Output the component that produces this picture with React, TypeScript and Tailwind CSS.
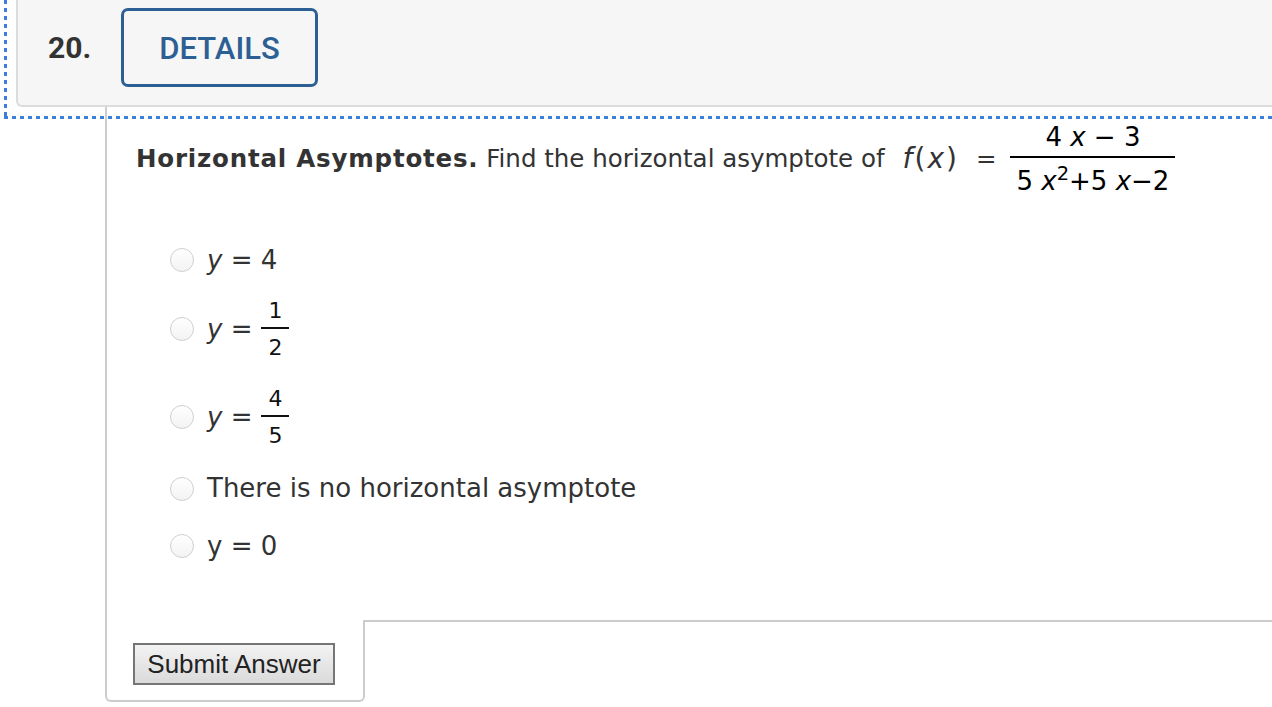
import React from "react";

function Radio() {
  return (
    <span className="block w-[24px] h-[24px] shrink-0 rounded-full border border-[#cfcfcf] bg-gradient-to-b from-white to-[#f3f3f3]" />
  );
}

function SmallFrac({ num, den }: { num: string; den: string }) {
  return (
    <span className="inline-flex flex-col items-center text-[22px] text-[#111]">
      <span className="leading-[20px] px-[7px]">{num}</span>
      <span className="mt-[6px] h-[2px] w-full bg-[#111]" />
      <span className="mt-[9px] leading-[20px] px-[7px]">{den}</span>
    </span>
  );
}

export default function App() {
  return (
    <div className="relative w-[1272px] h-[707px] overflow-hidden bg-white font-['DejaVu_Sans',sans-serif] text-[#333]">
      {/* header */}
      <div className="ml-[16px] mr-[-40px] h-[107px] pt-[8px] bg-[#f6f6f6] border-l-2 border-b-2 border-[#dcdcdc] rounded-bl-[6px]">
        <div className="flex items-center h-[79px] pl-[30px]">
          <span className="w-[73px] font-['Roboto',sans-serif] font-bold text-[30px] text-[#333]">20.</span>
          <span className="flex items-center justify-center w-[197px] h-[79px] pt-[3px] border-[3px] border-[#2c5f94] rounded-[7px] font-['Roboto',sans-serif] font-medium text-[31px] text-[#2c5f94]">
            DETAILS
          </span>
        </div>
      </div>

      {/* focus outline */}
      <div className="absolute left-[4px] top-0 w-[3px] h-[119px] bg-[repeating-linear-gradient(180deg,#3b7fdb_0px,#3b7fdb_4px,transparent_4px,transparent_8px)] pointer-events-none" />
      <div className="absolute left-[4px] top-[116px] right-0 h-[3px] bg-[repeating-linear-gradient(90deg,#3b7fdb_0px,#3b7fdb_4px,transparent_4px,transparent_8px)] pointer-events-none" />

      {/* card */}
      <div className="ml-[105px]">
        <div className="h-[513px] pt-[15px] border-l-2 border-[#cccccc] pl-[29px]">
          {/* question */}
          <div className="flex items-center whitespace-nowrap">
            <span className="text-[24.5px] leading-[30px]">
              <b className="font-bold text-[#333] tracking-[0.8px]">Horizontal Asymptotes.</b> Find the horizontal asymptote of
            </span>
            <span className="ml-[18px] text-[28px] leading-[30px] tracking-[2px]">
              <i>f</i>(<i>x</i>)
            </span>
            <span className="text-[24.5px] leading-[30px] ml-[17px] mr-[14px]">=</span>
            <span className="inline-flex flex-col items-center text-[26px] text-black">
              <span className="leading-[30px]">
                4 <i>x</i> − 3
              </span>
              <span className="mt-[4px] h-[2px] w-full bg-black" />
              <span className="mt-[8px] leading-[30px] px-[6px]">
                5 <i>x</i>
                <sup>2</sup>+5 <i>x</i>−2
              </span>
            </span>
          </div>

          {/* options */}
          <div className="ml-[34px] flex flex-col text-[26px]">
            <div className="flex items-center h-[40px] mt-[44px]">
              <Radio />
              <span className="ml-[13px] leading-[30px]">
                <i>y</i> = 4
              </span>
            </div>
            <div className="flex items-center h-[60px] mt-[19px]">
              <Radio />
              <span className="ml-[13px] leading-[30px] mr-[9px]">
                <i>y</i> =
              </span>
              <SmallFrac num="1" den="2" />
            </div>
            <div className="flex items-center h-[60px] mt-[28px]">
              <Radio />
              <span className="ml-[13px] leading-[30px] mr-[9px]">
                <i>y</i> =
              </span>
              <SmallFrac num="4" den="5" />
            </div>
            <div className="flex items-center h-[40px] mt-[22px]">
              <Radio />
              <span className="ml-[13px] leading-[30px] mb-[2px]">There is no horizontal asymptote</span>
            </div>
            <div className="flex items-center h-[40px] mt-[17px]">
              <Radio />
              <span className="ml-[13px] leading-[30px]">y = 0</span>
            </div>
          </div>
        </div>

        {/* bottom */}
        <div className="flex">
          <div className="w-[260px] h-[82px] border-l-2 border-r-2 border-b-2 border-[#cccccc] rounded-b-[6px] pl-[26px] pt-[23px]">
            <button className="w-[202px] h-[42px] border-2 border-[#767676] bg-gradient-to-b from-[#f3f3f3] to-[#dadada] font-['Liberation_Sans',sans-serif] text-[26px] leading-none text-[#222]">
              Submit Answer
            </button>
          </div>
          <div className="flex-1 -ml-[2px] border-t-2 border-[#cccccc]" />
        </div>
      </div>
    </div>
  );
}
